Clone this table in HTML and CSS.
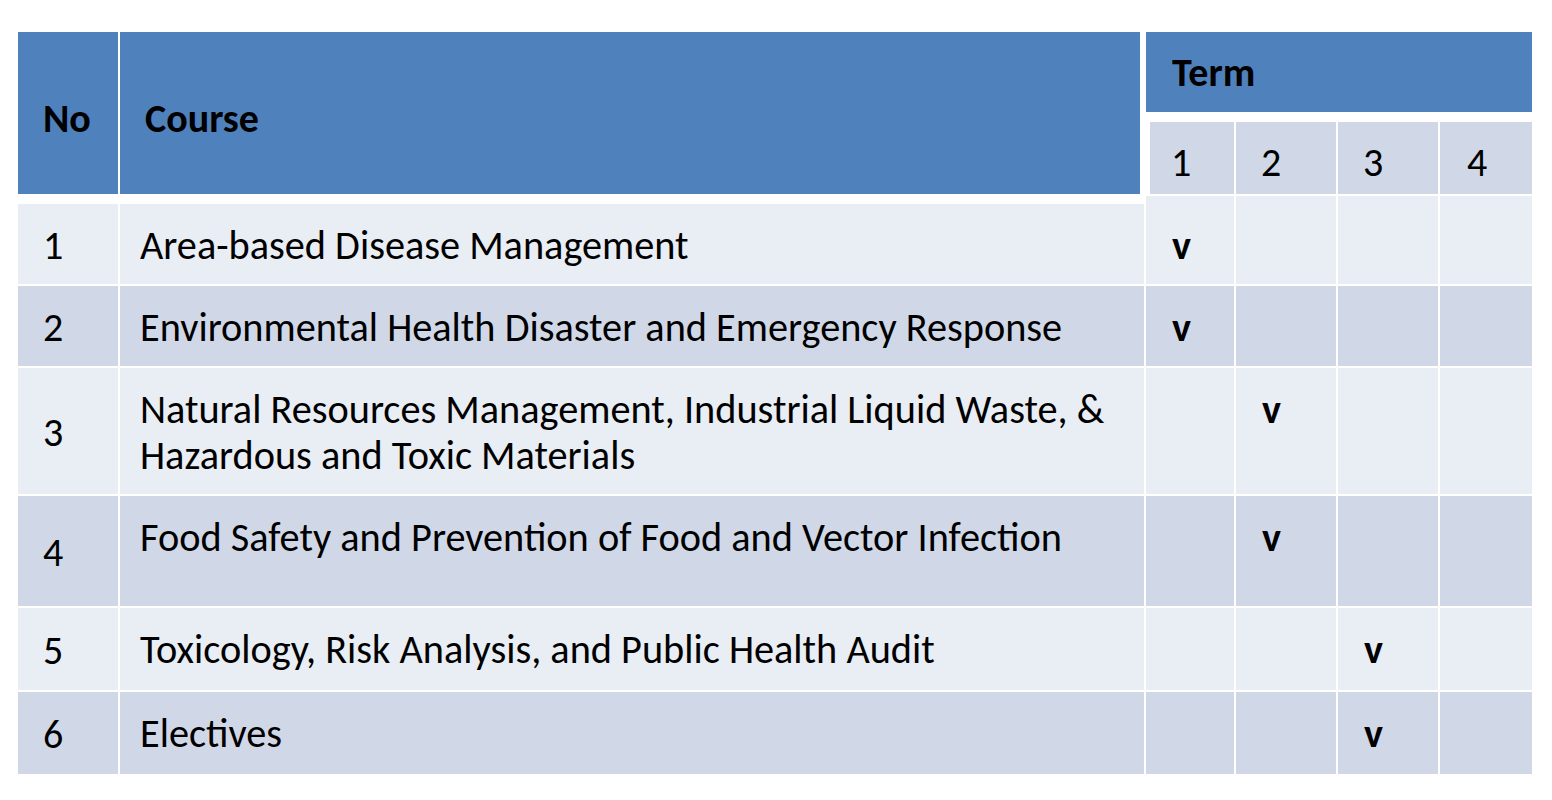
FILE: index.html
```html
<!DOCTYPE html>
<html lang="en">
<head>
<meta charset="utf-8">
<title>Course Terms</title>
<link rel="stylesheet" href="styles.css">
</head>
<body>
<div class="table">
  <div class="cell hd hd-no">No</div>
  <div class="cell hd hd-course">Course</div>
  <div class="cell hd hd-term">Term</div>
  <div class="spacer"></div>
  <div class="cell sub sub-1">1</div>
  <div class="cell sub sub-2">2</div>
  <div class="cell sub sub-3">3</div>
  <div class="cell sub sub-4">4</div>

  <div class="cell no light first">1</div>
  <div class="cell course light first">Area-based Disease Management</div>
  <div class="cell term light first-term">v</div>
  <div class="cell term light"></div>
  <div class="cell term light"></div>
  <div class="cell term light"></div>

  <div class="cell no dark">2</div>
  <div class="cell course dark">Environmental Health Disaster and Emergency Response</div>
  <div class="cell term dark">v</div>
  <div class="cell term dark"></div>
  <div class="cell term dark"></div>
  <div class="cell term dark"></div>

  <div class="cell no light">3</div>
  <div class="cell course light">Natural Resources Management, Industrial Liquid Waste, &amp;<br>Hazardous and Toxic Materials</div>
  <div class="cell term light"></div>
  <div class="cell term light">v</div>
  <div class="cell term light"></div>
  <div class="cell term light"></div>

  <div class="cell no dark">4</div>
  <div class="cell course dark">Food Safety and Prevention of Food and Vector Infection</div>
  <div class="cell term dark"></div>
  <div class="cell term dark">v</div>
  <div class="cell term dark"></div>
  <div class="cell term dark"></div>

  <div class="cell no light">5</div>
  <div class="cell course light">Toxicology, Risk Analysis, and Public Health Audit</div>
  <div class="cell term light"></div>
  <div class="cell term light"></div>
  <div class="cell term light">v</div>
  <div class="cell term light"></div>

  <div class="cell no dark">6</div>
  <div class="cell course dark">Electives</div>
  <div class="cell term dark"></div>
  <div class="cell term dark"></div>
  <div class="cell term dark">v</div>
  <div class="cell term dark"></div>
</div>
</body>
</html>
```
FILE: styles.css
```css
html, body {
  margin: 0;
  padding: 0;
  background: #ffffff;
}

body {
  padding: 32px 20px 0 18px;
  font-family: Carlito, Lato, "Liberation Sans", sans-serif;
  font-size: 40px;
  line-height: 46px;
  color: #000000;
}

.table {
  display: grid;
  width: 1514px;
  grid-template-columns: 100px 1024px 88px 100px 100px 92px;
  grid-template-rows: 80px 6px 72px 88px 80px 126px 110px 82px 82px;
  column-gap: 2px;
  row-gap: 2px;
}

.cell {
  box-sizing: border-box;
  white-space: nowrap;
}

.hd {
  background: #4f81bd;
  font-weight: bold;
}

.hd-no {
  grid-column: 1;
  grid-row: 1 / 4;
  padding: 64px 0 0 25px;
}

.hd-course {
  grid-column: 2;
  grid-row: 1 / 4;
  padding: 64px 0 0 25px;
  margin-right: 4px;
}

.hd-term {
  grid-column: 3 / 7;
  grid-row: 1;
  padding: 18px 0 0 26px;
}

.spacer {
  grid-column: 3 / 7;
  grid-row: 2;
}

.sub {
  grid-row: 3;
  background: #d0d8e8;
  padding: 18px 0 0 25px;
}

.sub-1 {
  grid-column: 3;
  margin-left: 4px;
  padding-left: 21px;
}

.sub-2 {
  grid-column: 4;
}

.sub-3 {
  grid-column: 5;
}

.sub-4 {
  grid-column: 6;
  padding-left: 27px;
}

.light {
  background: #e9edf4;
}

.dark {
  background: #d0d8e8;
}

.no {
  display: flex;
  align-items: center;
  padding: 4px 0 0 25px;
}

.course {
  padding: 19px 0 0 20px;
  font-size: 40.3px;
}

.term {
  padding: 19px 0 0 26px;
  font-weight: bold;
}

.term.first-term {
  padding-top: 27px;
}

.first {
  margin-top: 8px;
}

.course.first {
  padding-top: 19px;
}
```
